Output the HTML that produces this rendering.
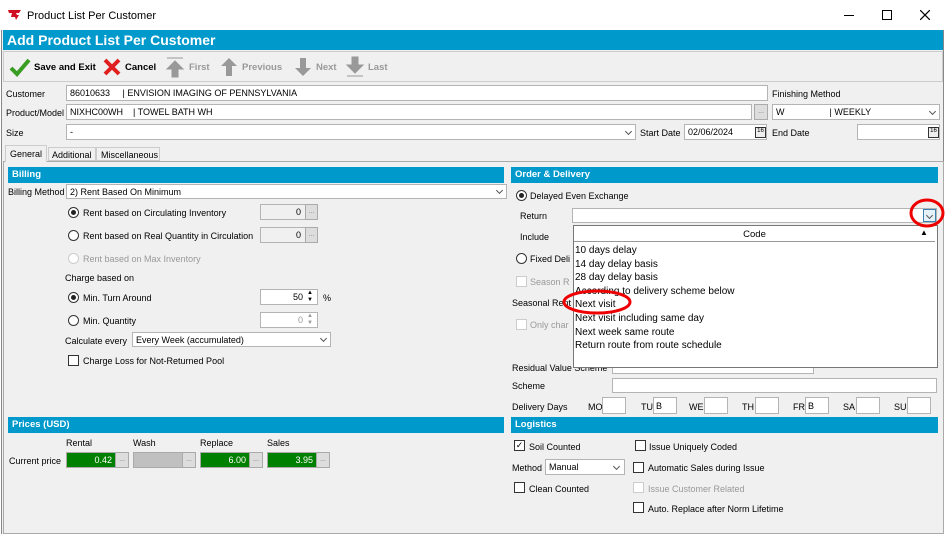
<!DOCTYPE html>
<html><head><meta charset="utf-8"><style>
*{box-sizing:border-box;margin:0;padding:0}
body{width:947px;height:534px;background:#fff;font-family:"Liberation Sans",Arial,sans-serif;font-size:9px;color:#000;position:relative;overflow:hidden}
.a{position:absolute;white-space:nowrap}
.box{position:absolute;background:#fff;border:1px solid #b4b4b4}
.hdr{position:absolute;background:#0099cc;color:#fff;font-weight:bold;font-size:9.5px;padding:2px 4px;height:16px}
.rad{position:absolute;width:11px;height:11px;border:1px solid #333;border-radius:50%;background:#fff}
.rad.on::after{content:"";position:absolute;left:2px;top:2px;width:5px;height:5px;border-radius:50%;background:#222}
.chk{position:absolute;width:11px;height:11px;border:1px solid #333;background:#fff}
.dis{color:#999}
.ar{position:absolute;width:8px;height:5px}
.ar::before{content:"";position:absolute;left:1px;top:-2px;width:4px;height:4px;border-right:1px solid #555;border-bottom:1px solid #555;transform:rotate(45deg)}
.g{position:absolute;background:#008000;color:#fff;text-align:right;padding:2px 3px;border:1px solid #aaa;height:16px}
.dot{position:absolute;background:#ddd;border:1px solid #aaa;height:16px;width:16px;font-size:7px;color:#777;text-align:center;line-height:14px}
.tb{font-weight:bold;font-size:9.5px}
</style></head><body>
<!-- title bar -->
<svg class="a" style="left:8px;top:10px" width="14" height="12"><path d="M0 0h13l-2 3H8l1 2 2 0-3 5-1-3H3L4 3H1z" fill="#d01020"/></svg>
<div class="a" style="left:27px;top:10px;font-size:11px">Product List Per Customer</div>
<div class="a" style="left:844px;top:15px;width:10px;height:1px;background:#000"></div>
<div class="a" style="left:882px;top:10px;width:10px;height:10px;border:1px solid #000"></div>
<svg class="a" style="left:920px;top:10px" width="10" height="10"><path d="M0 0l10 10M10 0L0 10" stroke="#000" stroke-width="1.2"/></svg>
<!-- window -->
<div class="a" style="left:1px;top:30px;width:943px;height:504px;background:#f0f0f0;border-left:1px solid #888;border-right:1px solid #888"></div>
<div class="a" style="left:3px;top:30px;width:940px;height:20px;background:#0099cc;color:#fff;font-weight:bold;font-size:14px;padding:2px 4px">Add Product List Per Customer</div>
<div class="a" style="left:3px;top:51px;width:940px;height:31px;border:1px solid #ccc;background:#f0f0f0"></div>
<svg class="a" style="left:9px;top:57px" width="22" height="20"><path d="M2 11l6 6L20 3" stroke="#3a9d23" stroke-width="4" fill="none"/></svg>
<div class="a tb" style="left:34px;top:62px">Save and Exit</div>
<svg class="a" style="left:102px;top:57px" width="20" height="20"><path d="M3 3l14 14M17 3L3 17" stroke="#e02020" stroke-width="4"/></svg>
<div class="a tb" style="left:125px;top:62px">Cancel</div>
<svg class="a" style="left:165px;top:56px" width="20" height="22"><path d="M2 2h16M10 5l-8 8h5v8h6v-8h5z" stroke="#999" fill="#999"/></svg>
<div class="a tb" style="left:189px;top:62px;color:#999">First</div>
<svg class="a" style="left:219px;top:56px" width="20" height="22"><path d="M10 2l-8 8h5v10h6V10h5z" fill="#999"/></svg>
<div class="a tb" style="left:242px;top:62px;color:#999">Previous</div>
<svg class="a" style="left:293px;top:56px" width="20" height="22"><path d="M10 20l-8-8h5V2h6v10h5z" fill="#999"/></svg>
<div class="a tb" style="left:316px;top:62px;color:#999">Next</div>
<svg class="a" style="left:345px;top:56px" width="20" height="22"><path d="M10 17l-8-8h5V1h6v8h5zM2 20h16" stroke="#999" fill="#999"/></svg>
<div class="a tb" style="left:368px;top:62px;color:#999">Last</div>
<!-- fields -->
<div class="a" style="left:6px;top:89px">Customer</div>
<div class="box" style="left:66px;top:85px;width:702px;height:16px;padding:2px 3px">86010633 &nbsp;&nbsp;&nbsp;&nbsp;| ENVISION IMAGING OF PENNSYLVANIA</div>
<div class="a" style="left:772px;top:89px">Finishing Method</div>
<div class="a" style="left:6px;top:108px">Product/Model</div>
<div class="box" style="left:66px;top:104px;width:686px;height:16px;padding:2px 3px">NIXHC00WH &nbsp;&nbsp;&nbsp;| TOWEL BATH WH</div>
<div class="dot" style="left:754px;top:104px;width:14px">...</div>
<div class="box" style="left:772px;top:104px;width:168px;height:16px;padding:2px 3px">W &nbsp;&nbsp;&nbsp;&nbsp;&nbsp;&nbsp;&nbsp;&nbsp;&nbsp;&nbsp;&nbsp;&nbsp;&nbsp;&nbsp;&nbsp;&nbsp;&nbsp;| WEEKLY</div>
<div class="ar" style="left:929px;top:111px"></div>
<div class="a" style="left:6px;top:128px">Size</div>
<div class="box" style="left:66px;top:124px;width:570px;height:16px;padding:2px 3px">-</div>
<div class="ar" style="left:625px;top:131px"></div>
<div class="a" style="left:640px;top:128px">Start Date</div>
<div class="box" style="left:684px;top:124px;width:83px;height:16px;padding:2px 3px">02/06/2024</div>
<div class="a" style="left:755px;top:127px;width:11px;height:11px;border:1px solid #333;font-size:6px;text-align:center;background:#eee">16</div>
<div class="a" style="left:772px;top:128px">End Date</div>
<div class="box" style="left:857px;top:124px;width:83px;height:16px"></div>
<div class="a" style="left:928px;top:127px;width:11px;height:11px;border:1px solid #333;font-size:6px;text-align:center;background:#eee">16</div>
<!-- tabs -->
<div class="a" style="left:3px;top:161px;width:941px;height:373px;border:1px solid #aaa;background:#f0f0f0"></div>
<div class="a" style="left:5px;top:145px;width:42px;height:17px;border:1px solid #ccc;border-bottom:none;background:#f0f0f0;padding:3px 4px">General</div>
<div class="a" style="left:48px;top:147px;width:48px;height:14px;border:1px solid #ccc;padding:2px 3px">Additional</div>
<div class="a" style="left:96px;top:147px;width:64px;height:14px;border:1px solid #ccc;padding:2px 4px">Miscellaneous</div>
<!-- billing -->
<div class="hdr" style="left:8px;top:167px;width:496px">Billing</div>
<div class="a" style="left:8px;top:187px">Billing Method</div>
<div class="box" style="left:66px;top:184px;width:441px;height:15px;padding:2px 3px">2) Rent Based On Minimum</div>
<div class="ar" style="left:496px;top:190px"></div>
<div class="rad on" style="left:68px;top:207px"></div><div class="a" style="left:83px;top:208px">Rent based on Circulating Inventory</div>
<div class="box" style="left:260px;top:204px;width:58px;height:16px;background:#f0f0f0;text-align:right;padding:2px 16px 0 0">0</div><div class="dot" style="left:305px;top:204px;width:13px">...</div>
<div class="rad" style="left:68px;top:230px"></div><div class="a" style="left:83px;top:231px">Rent based on Real Quantity in Circulation</div>
<div class="box" style="left:260px;top:227px;width:58px;height:16px;background:#f0f0f0;text-align:right;padding:2px 16px 0 0">0</div><div class="dot" style="left:305px;top:227px;width:13px">...</div>
<div class="rad" style="left:68px;top:253px;border-color:#ccc"></div><div class="a dis" style="left:83px;top:254px">Rent based on Max Inventory</div>
<div class="a" style="left:65px;top:273px">Charge based on</div>
<div class="rad on" style="left:68px;top:292px"></div><div class="a" style="left:83px;top:293px">Min. Turn Around</div>
<div class="box" style="left:260px;top:289px;width:58px;height:16px;text-align:right;padding:2px 14px 0 0">50</div><div class="a" style="left:307px;top:290px;font-size:6px;line-height:7px">▲<br>▼</div>
<div class="a" style="left:323px;top:293px">%</div>
<div class="rad" style="left:68px;top:315px"></div><div class="a" style="left:83px;top:316px">Min. Quantity</div>
<div class="box" style="left:260px;top:312px;width:58px;height:16px;text-align:right;padding:2px 14px 0 0;color:#999">0</div><div class="a" style="left:307px;top:313px;font-size:6px;line-height:7px;color:#999">▲<br>▼</div>
<div class="a" style="left:65px;top:336px">Calculate every</div>
<div class="box" style="left:132px;top:332px;width:199px;height:15px;padding:2px 3px">Every Week (accumulated)</div>
<div class="ar" style="left:320px;top:338px"></div>
<div class="chk" style="left:68px;top:355px"></div><div class="a" style="left:83px;top:356px">Charge Loss for Not-Returned Pool</div>
<!-- prices -->
<div class="hdr" style="left:8px;top:417px;width:496px">Prices (USD)</div>
<div class="a" style="left:66px;top:438px">Rental</div><div class="a" style="left:133px;top:438px">Wash</div><div class="a" style="left:200px;top:438px">Replace</div><div class="a" style="left:267px;top:438px">Sales</div>
<div class="a" style="left:9px;top:456px">Current price</div>
<div class="g" style="left:66px;top:452px;width:50px">0.42</div><div class="dot" style="left:115px;top:452px;width:14px">...</div>
<div class="g" style="left:133px;top:452px;width:50px;background:#c0c0c0"></div><div class="dot" style="left:182px;top:452px;width:14px">...</div>
<div class="g" style="left:200px;top:452px;width:50px">6.00</div><div class="dot" style="left:249px;top:452px;width:14px">...</div>
<div class="g" style="left:267px;top:452px;width:50px">3.95</div><div class="dot" style="left:316px;top:452px;width:14px">...</div>
<!-- order & delivery -->
<div class="hdr" style="left:511px;top:167px;width:427px">Order &amp; Delivery</div>
<div class="rad on" style="left:516px;top:190px"></div><div class="a" style="left:530px;top:191px">Delayed Even Exchange</div>
<div class="a" style="left:520px;top:211px">Return</div>
<div class="box" style="left:572px;top:208px;width:365px;height:15px"></div>
<div class="a" style="left:923px;top:209px;width:13px;height:13px;border:1px solid #3c7fb1;background:#e5f1fb"></div>
<div class="ar" style="left:926px;top:215px"></div>
<div class="a" style="left:520px;top:232px">Include</div>
<div class="rad" style="left:516px;top:253px"></div><div class="a" style="left:530px;top:254px">Fixed Deli</div>
<div class="chk" style="left:516px;top:276px;border-color:#ccc"></div><div class="a dis" style="left:530px;top:277px">Season R</div>
<div class="a" style="left:512px;top:298px">Seasonal Rent</div>
<div class="chk" style="left:516px;top:319px;border-color:#ccc"></div><div class="a dis" style="left:530px;top:320px">Only char</div>
<div class="a" style="left:512px;top:363px">Residual Value Scheme</div>
<div class="box" style="left:612px;top:360px;width:202px;height:14px"></div>
<!-- dropdown -->
<div class="a" style="left:573px;top:225px;width:365px;height:143px;background:#fff;border:1px solid #777"></div>
<div class="a" style="left:574px;top:226px;width:361px;height:16px;border-bottom:1px solid #999;text-align:center;padding-top:3px;font-size:9.5px;background:#fff">Code</div>
<div class="a" style="left:920px;top:228px;font-size:8px">▲</div>
<div class="a" style="left:575px;top:244px;font-size:10px;line-height:13.6px">10 days delay<br>14 day delay basis<br>28 day delay basis<br>According to delivery scheme below<br>Next visit<br>Next visit including same day<br>Next week same route<br>Return route from route schedule</div>
<div class="a" style="left:512px;top:381px">Scheme</div>
<div class="box" style="left:612px;top:378px;width:325px;height:15px"></div>
<div class="a" style="left:512px;top:402px">Delivery Days</div>
<div class="a" style="left:588px;top:402px">MO</div><div class="box" style="left:602px;top:397px;width:24px;height:17px"></div>
<div class="a" style="left:641px;top:402px">TU</div><div class="box" style="left:653px;top:397px;width:24px;height:17px;padding:3px 2px">B</div>
<div class="a" style="left:689px;top:402px">WE</div><div class="box" style="left:704px;top:397px;width:24px;height:17px"></div>
<div class="a" style="left:742px;top:402px">TH</div><div class="box" style="left:755px;top:397px;width:24px;height:17px"></div>
<div class="a" style="left:793px;top:402px">FR</div><div class="box" style="left:805px;top:397px;width:24px;height:17px;padding:3px 2px">B</div>
<div class="a" style="left:843px;top:402px">SA</div><div class="box" style="left:856px;top:397px;width:24px;height:17px"></div>
<div class="a" style="left:894px;top:402px">SU</div><div class="box" style="left:907px;top:397px;width:24px;height:17px"></div>
<!-- logistics -->
<div class="hdr" style="left:511px;top:417px;width:427px">Logistics</div>
<div class="chk" style="left:514px;top:440px;font-size:9px;line-height:9px;text-align:center">✓</div><div class="a" style="left:529px;top:442px">Soil Counted</div>
<div class="chk" style="left:635px;top:440px"></div><div class="a" style="left:649px;top:442px">Issue Uniquely Coded</div>
<div class="a" style="left:512px;top:463px">Method</div>
<div class="box" style="left:545px;top:459px;width:80px;height:16px;padding:2px 3px">Manual</div><div class="ar" style="left:613px;top:466px"></div>
<div class="chk" style="left:633px;top:462px"></div><div class="a" style="left:648px;top:463px">Automatic Sales during Issue</div>
<div class="chk" style="left:514px;top:482px"></div><div class="a" style="left:529px;top:484px">Clean Counted</div>
<div class="chk" style="left:633px;top:482px;border-color:#ccc"></div><div class="a dis" style="left:648px;top:484px">Issue Customer Related</div>
<div class="chk" style="left:633px;top:502px"></div><div class="a" style="left:648px;top:504px">Auto. Replace after Norm Lifetime</div>
<!-- red circles -->
<svg class="a" style="left:0;top:0" width="947" height="534"><ellipse cx="927" cy="213" rx="16" ry="13" stroke="#e00" stroke-width="3" fill="none"/><ellipse cx="597" cy="302" rx="33" ry="11" stroke="#e00" stroke-width="3" fill="none"/></svg>
</body></html>
